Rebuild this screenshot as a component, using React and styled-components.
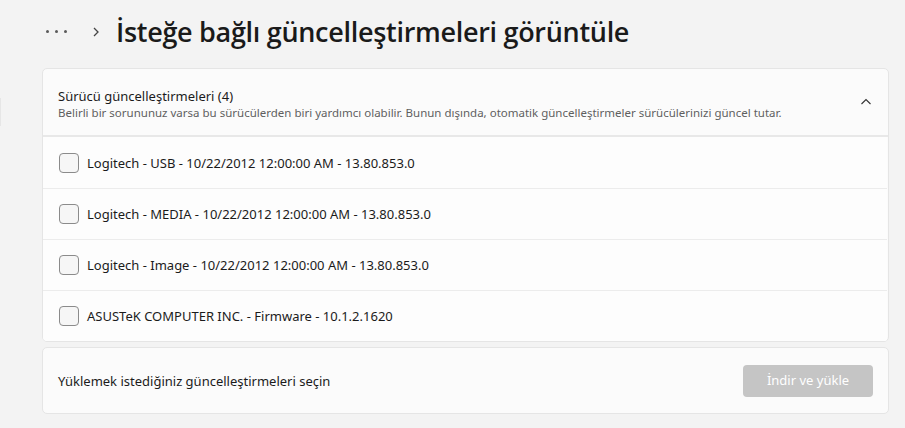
import React from "react";
import styled, { createGlobalStyle } from "styled-components";

const GlobalStyle = createGlobalStyle`
  html, body {
    margin: 0;
    padding: 0;
    background: #f3f3f3;
  }
  body {
    font-family: "Noto Sans", "Open Sans", sans-serif;
    color: #1b1b1b;
  }
`;

const Page = styled.div`
  position: relative;
  width: 905px;
  height: 428px;
  overflow: hidden;
  padding: 0 16px 0 42px;
  box-sizing: border-box;
`;

const EdgeMark = styled.div`
  position: absolute;
  left: 0;
  top: 98px;
  width: 1px;
  height: 28px;
  background: #e6e6e6;
`;

const Breadcrumb = styled.header`
  display: flex;
  align-items: center;
  height: 68px;
  padding-bottom: 5px;
  box-sizing: border-box;
`;

const More = styled.span`
  display: flex;
  gap: 6px;
  margin-left: 4px;
  margin-right: 23px;

  & > i {
    display: block;
    width: 3px;
    height: 3px;
    border-radius: 50%;
    background: #5a5a5a;
  }
`;

const Title = styled.h1`
  margin: 0 0 0 14px;
  font-family: "Open Sans", "Noto Sans", sans-serif;
  font-size: 27px;
  font-weight: 600;
  letter-spacing: -0.3px;
  color: #1a1a1a;
`;

const Card = styled.section`
  background: #fbfbfb;
  border: 1px solid #e5e5e5;
  border-radius: 5px;
  overflow: hidden;
`;

const Expander = styled.div`
  display: flex;
  align-items: center;
  justify-content: space-between;
  height: 66px;
  padding: 0 16px 0 15px;
  border-bottom: 2px solid #e8e8e8;
  box-sizing: content-box;
`;

const HeaderText = styled.div`
  display: flex;
  flex-direction: column;
  padding-top: 3px;
`;

const Heading = styled.div`
  font-size: 13px;
  line-height: 18px;
  color: #1b1b1b;
`;

const Sub = styled.div`
  font-size: 11.5px;
  line-height: 16px;
  color: #5f5f5f;
`;

const List = styled.div`
  margin-right: 1px;
  background: #fdfdfd;
`;

const Row = styled.label`
  display: flex;
  align-items: center;
  gap: 8px;
  height: 51px;
  padding-left: 16px;
  font-size: 13px;
  color: #1b1b1b;
  border-top: ${p => (p.$first ? "none" : "1px solid #ececec")};
  box-sizing: border-box;
`;

const Box = styled.span`
  width: 18px;
  height: 18px;
  border: 1px solid #8b8b8b;
  border-radius: 4px;
  background: #f6f6f6;
  flex-shrink: 0;
`;

const Footer = styled(Card)`
  display: flex;
  align-items: center;
  justify-content: space-between;
  height: 67px;
  margin-top: 5px;
  padding: 0 15px;
  font-size: 13px;
  box-sizing: border-box;
`;

const Button = styled.button`
  width: 130px;
  height: 32px;
  border: none;
  border-radius: 4px;
  background: #c5c5c5;
  color: #ffffff;
  font-family: inherit;
  font-size: 13px;
  padding: 0 0 2px;
`;

const drivers = [
  "Logitech - USB - 10/22/2012 12:00:00 AM - 13.80.853.0",
  "Logitech - MEDIA - 10/22/2012 12:00:00 AM - 13.80.853.0",
  "Logitech - Image - 10/22/2012 12:00:00 AM - 13.80.853.0",
  "ASUSTeK COMPUTER INC. - Firmware - 10.1.2.1620",
];

export default function App() {
  return (
    <>
      <GlobalStyle />
      <Page>
        <EdgeMark />
        <Breadcrumb>
          <More>
            <i />
            <i />
            <i />
          </More>
          <svg width="12" height="12" viewBox="0 0 12 12">
            <path d="M4 2 L8 6 L4 10" fill="none" stroke="#444" strokeWidth="1.3" />
          </svg>
          <Title>İsteğe bağlı güncelleştirmeleri görüntüle</Title>
        </Breadcrumb>
        <Card>
          <Expander>
            <HeaderText>
              <Heading>Sürücü güncelleştirmeleri (4)</Heading>
              <Sub>
                Belirli bir sorununuz varsa bu sürücülerden biri yardımcı olabilir. Bunun dışında, otomatik
                güncelleştirmeler sürücülerinizi güncel tutar.
              </Sub>
            </HeaderText>
            <svg width="12" height="12" viewBox="0 0 12 12">
              <path d="M1.5 8 L6 3.5 L10.5 8" fill="none" stroke="#333" strokeWidth="1.1" />
            </svg>
          </Expander>
          <List>
            {drivers.map((d, i) => (
              <Row key={d} $first={i === 0}>
                <Box />
                {d}
              </Row>
            ))}
          </List>
        </Card>
        <Footer>
          Yüklemek istediğiniz güncelleştirmeleri seçin
          <Button>İndir ve yükle</Button>
        </Footer>
      </Page>
    </>
  );
}
